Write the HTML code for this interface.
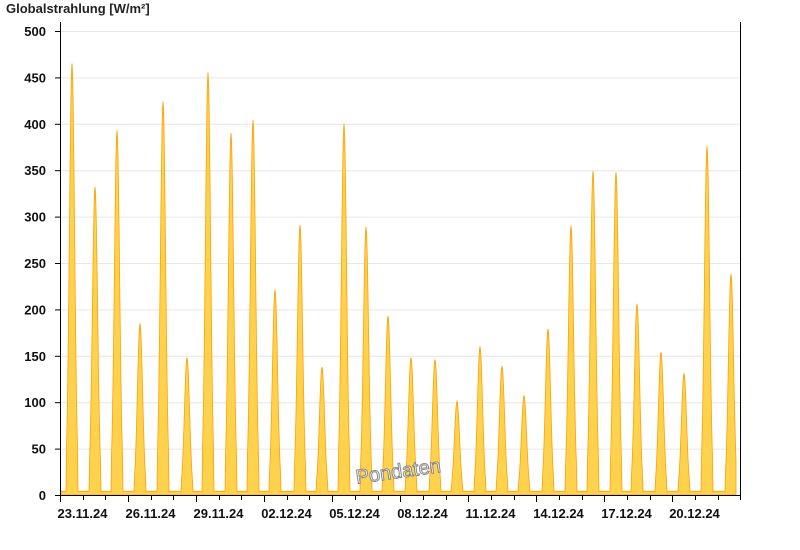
<!DOCTYPE html>
<html><head><meta charset="utf-8"><style>
body{margin:0;background:#fff;width:800px;height:550px;overflow:hidden}
svg{display:block;font-family:"Liberation Sans",Arial,sans-serif}
</style></head><body>
<svg id="s" width="800" height="550" xmlns="http://www.w3.org/2000/svg">
<text x="6" y="13" font-size="13" font-weight="bold" fill="#222">Globalstrahlung [W/m²]</text>
<g id="grid" stroke="#e6e6e6" stroke-width="1"></g>
<g id="ylab" font-size="13" font-weight="bold" fill="#111" text-anchor="end"></g>
<polygon id="area" fill="#ffd24d" stroke="#ffa000" stroke-width="0.8"/>
<line x1="60.5" y1="22" x2="60.5" y2="500" stroke="#000"/>
<line x1="740.5" y1="22" x2="740.5" y2="500" stroke="#000"/>
<line x1="55" y1="495.5" x2="741" y2="495.5" stroke="#000"/>
<g id="xt" stroke="#000"></g>
<g id="xl" font-size="13" font-weight="bold" fill="#111" text-anchor="middle"></g>
<text x="398" y="478" font-size="20" fill="#fff" stroke="#888" stroke-width="1" text-anchor="middle" transform="rotate(-8 398 470)">Pondaten</text>
</svg>
<script>
var ns="http://www.w3.org/2000/svg";
function Y(v){return 495-v*0.928;}
var g=document.getElementById('grid'),yl=document.getElementById('ylab');
for(var v=0;v<=500;v+=50){var y=Y(v);
 if(v>0){var l=document.createElementNS(ns,'line');l.setAttribute('x1',61);l.setAttribute('x2',740);l.setAttribute('y1',y+.5);l.setAttribute('y2',y+.5);g.appendChild(l);}
 var t=document.createElementNS(ns,'line');t.setAttribute('x1',55);t.setAttribute('x2',60);t.setAttribute('y1',y+.5);t.setAttribute('y2',y+.5);t.setAttribute('stroke','#000');g.appendChild(t);
 var tx=document.createElementNS(ns,'text');tx.setAttribute('x',46);tx.setAttribute('y',y+5);tx.textContent=v;yl.appendChild(tx);}
var xt=document.getElementById('xt'),xl=document.getElementById('xl');
var d=22.68;
var labels=["23.11.24","26.11.24","29.11.24","02.12.24","05.12.24","08.12.24","11.12.24","14.12.24","17.12.24","20.12.24"];
for(var k=0;k<30;k++){var x=Math.round(60+d*k)+.5;var l=document.createElementNS(ns,'line');l.setAttribute('x1',x);l.setAttribute('x2',x);l.setAttribute('y1',495);l.setAttribute('y2',k%3==0?502:500);xt.appendChild(l);
 if(k%3==0){var t=document.createElementNS(ns,'text');t.setAttribute('x',x+22);t.setAttribute('y',518);t.textContent=labels[k/3];xl.appendChild(t);}}
var peaks=[[72,465],[95,332],[117,393],[140,185],[163,424],[187,148],[208,455],[231,390],[253,404],[275,221],[300,291],[322,138],[344,400],[366,289],[388,193],[411,148],[435,146],[457,101],[480,160],[502,139],[524,107],[548,179],[571,290],[593,349],[616,348],[637,206],[661,154],[684,131],[707,376],[731,238]];
var pts=[[61,495],[61,Y(5)]];
for(var x=61;x<=736;x+=0.5){var v=4;
 peaks.forEach(function(p){var dx=x-p[0];var w=2.6;var val=p[1]*Math.exp(-dx*dx/(2*w*w));if(Math.abs(dx)<=5.5&&val>v)v=val;});
 pts.push([x,Y(v)]);}
pts.push([736,495]);
document.getElementById('area').setAttribute('points',pts.map(function(p){return p[0]+','+p[1].toFixed(1)}).join(' '));
</script>
</body></html>
